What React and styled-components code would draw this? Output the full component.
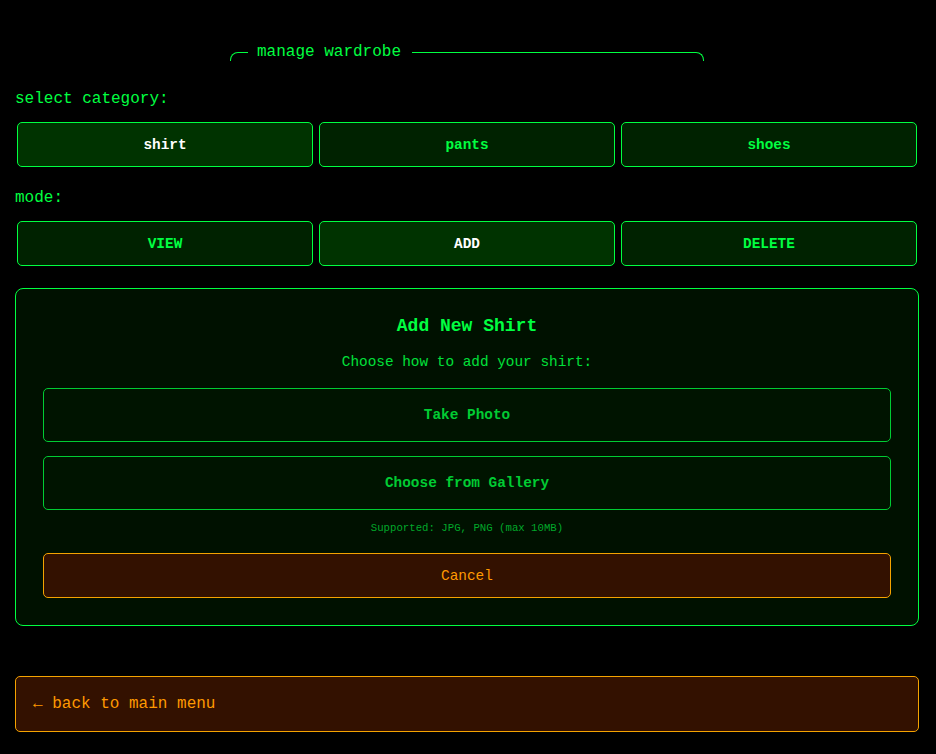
import React, { useState } from "react";
import styled, { createGlobalStyle } from "styled-components";

const GlobalStyle = createGlobalStyle`
  html, body {
    margin: 0;
    padding: 0;
    background: #000;
  }
  body {
    font-family: "Liberation Mono", "Courier New", monospace;
    color: #00ff41;
  }
  * { box-sizing: border-box; }
`;

const Page = styled.div`
  width: 904px;
  margin-left: 15px;
  padding: 43px 0 22px;
  display: flex;
  flex-direction: column;
`;

const Header = styled.fieldset`
  width: 474px;
  margin: 0 auto;
  padding: 0 0 0 17px;
  border: 1px solid #00ff41;
  border-bottom: none;
  border-radius: 8px 8px 0 0;
  height: 16px;
  min-width: 0;

  legend {
    padding: 0 11px 0 9px;
    font-size: 16px;
    line-height: 18px;
    color: #00ff41;
  }
`;

const Label = styled.div`
  font-size: 16px;
  line-height: 18px;
  color: #00ff41;
  margin: ${p => p.$top || 0}px 0 14px;
`;

const ButtonRow = styled.div`
  display: grid;
  grid-template-columns: repeat(3, 1fr);
  gap: 6px;
  padding: 0 2px;
`;

const ToggleButton = styled.button`
  height: 45px;
  border: 1px solid #00ff41;
  border-radius: 5px;
  background: ${p => (p.$active ? "#003300" : "#002200")};
  color: ${p => (p.$active ? "#ffffff" : "#00ff41")};
  font-family: "Liberation Mono", "Courier New", monospace;
  font-size: 14.4px;
  font-weight: bold;
  cursor: pointer;
`;

const Panel = styled.div`
  margin-top: 22px;
  border: 1px solid #00ff41;
  border-radius: 8px;
  background: #001100;
  padding: 27px;
  display: flex;
  flex-direction: column;
  align-items: stretch;
  text-align: center;
`;

const Title = styled.h2`
  margin: 0 0 18px;
  font-size: 18px;
  line-height: 20px;
  font-weight: bold;
  color: #00ff41;
`;

const Subtitle = styled.p`
  margin: 0 0 18px;
  font-size: 14.4px;
  line-height: 16px;
  color: #00e03a;
`;

const OptionButton = styled.button`
  height: 54px;
  margin-bottom: ${p => p.$gap || 0}px;
  border: 1px solid #00cc33;
  border-radius: 5px;
  background: #001400;
  color: #00cc33;
  font-family: "Liberation Mono", "Courier New", monospace;
  font-size: 14.4px;
  font-weight: bold;
  cursor: pointer;
`;

const Hint = styled.p`
  margin: 12px 0 19px;
  font-size: 10.7px;
  line-height: 12px;
  color: #00a82a;
`;

const WarnButton = styled.button`
  height: ${p => p.$h}px;
  border: 1px solid #f5a300;
  border-radius: 5px;
  background: #331100;
  color: #ff9900;
  font-family: "Liberation Mono", "Courier New", monospace;
  font-size: ${p => p.$size}px;
  text-align: ${p => p.$align || "center"};
  padding: 0 ${p => p.$pad || 0}px;
  cursor: pointer;
`;

const BackButton = styled(WarnButton)`
  margin-top: 50px;
`;

const categories = ["shirt", "pants", "shoes"];
const modes = ["VIEW", "ADD", "DELETE"];

export default function App() {
  const [category, setCategory] = useState("shirt");
  const [mode, setMode] = useState("ADD");

  return (
    <>
      <GlobalStyle />
      <Page>
        <Header>
          <legend>manage wardrobe</legend>
        </Header>

        <Label $top={31}>select category:</Label>
        <ButtonRow>
          {categories.map(c => (
            <ToggleButton key={c} $active={c === category} onClick={() => setCategory(c)}>
              {c}
            </ToggleButton>
          ))}
        </ButtonRow>

        <Label $top={22}>mode:</Label>
        <ButtonRow>
          {modes.map(m => (
            <ToggleButton key={m} $active={m === mode} onClick={() => setMode(m)}>
              {m}
            </ToggleButton>
          ))}
        </ButtonRow>

        <Panel>
          <Title>Add New Shirt</Title>
          <Subtitle>Choose how to add your shirt:</Subtitle>
          <OptionButton $gap={14}>Take Photo</OptionButton>
          <OptionButton>Choose from Gallery</OptionButton>
          <Hint>Supported: JPG, PNG (max 10MB)</Hint>
          <WarnButton $h={45} $size={14.4}>Cancel</WarnButton>
        </Panel>

        <BackButton $h={56} $size={16} $align="left" $pad={17}>
          ← back to main menu
        </BackButton>
      </Page>
    </>
  );
}
